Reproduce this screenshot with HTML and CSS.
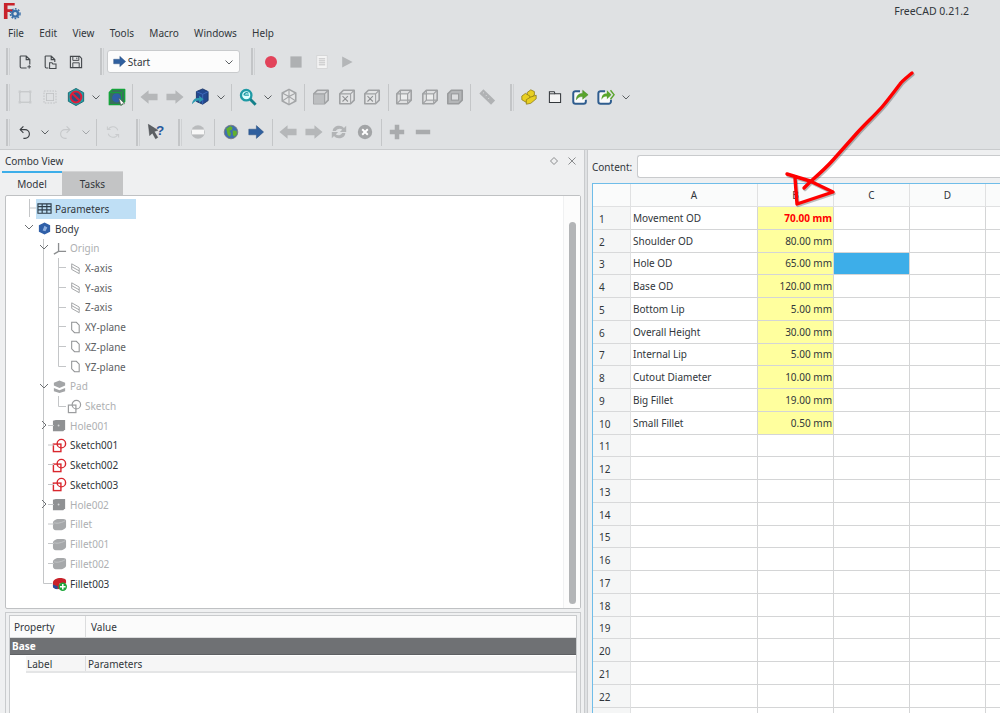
FILE: index.html
```html
<!DOCTYPE html>
<html lang="en">
<head>
<meta charset="utf-8">
<title>FreeCAD 0.21.2</title>
<link rel="stylesheet" href="styles.css">
</head>
<body>
<svg class="defs" width="0" height="0" aria-hidden="true">
  <defs>
    <symbol id="i-new" viewBox="0 0 20 20"><path d="M4 2.500h7.500l4.500 4.500v6M12 17.500H5.500a1.500 1.500 0 0 1-1.500-1.500V2.500M11.500 2.500V7H16" fill="none" stroke="#45494d" stroke-width="1.400"/><path d="M13 16h4.500M15.250 13.750v4.500" stroke="#45494d" stroke-width="1.200"/></symbol>
    <symbol id="i-open" viewBox="0 0 20 20"><path d="M4 2.500h7.500l4.500 4.500v3M8 17.500H5.500a1.500 1.500 0 0 1-1.500-1.500V2.500M11.500 2.500V7H16" fill="none" stroke="#45494d" stroke-width="1.400"/><path d="M9.500 11h3l1 1.500h4v5.500h-8z" fill="none" stroke="#45494d" stroke-width="1.300"/></symbol>
    <symbol id="i-save" viewBox="0 0 20 20"><path d="M3 3h11.500L17 5.500V17H3z" fill="none" stroke="#45494d" stroke-width="1.400"/><path d="M6 3v5h7.500V3M6 17v-6h8v6M11 4.500v2" fill="none" stroke="#45494d" stroke-width="1.200"/></symbol>
    <symbol id="i-rec" viewBox="0 0 20 20"><circle cx="10" cy="10" r="7.500" fill="#e2435a"/></symbol>
    <symbol id="i-stop" viewBox="0 0 20 20"><rect x="3" y="3" width="14" height="14" fill="#aeb0b2"/></symbol>
    <symbol id="i-doc" viewBox="0 0 20 20"><rect x="3.500" y="2" width="13" height="16" fill="#f4f4f4" stroke="#d2d3d4"/><path d="M6 6h8M6 8.500h8M6 11h8M6 13.500h8" stroke="#b5b6b7"/></symbol>
    <symbol id="i-play" viewBox="0 0 20 20"><path d="M4 3l13 7-13 7z" fill="#b4b6b8"/></symbol>
    <symbol id="i-fit" viewBox="0 0 20 20"><rect x="3.500" y="3.500" width="13" height="13" fill="none" stroke="#c0c2c4" stroke-width="1.300"/><path d="M2 2h3v3H2zM15 2h3v3h-3zM2 15h3v3H2zM15 15h3v3h-3z" fill="#c9cbcd"/></symbol>
    <symbol id="i-fitsel" viewBox="0 0 20 20"><rect x="2.500" y="2.500" width="15" height="15" fill="none" stroke="#c0c2c4" stroke-width="1.200" stroke-dasharray="2 1.500"/><rect x="5.500" y="5.500" width="9" height="9" fill="none" stroke="#c0c2c4"/></symbol>
    <symbol id="i-noway" viewBox="0 0 20 20"><path d="M10 .5l8.500 4.700v9.600L10 19.500l-8.500-4.700V5.200z" fill="#1fa3ab" stroke="#17646c"/><circle cx="10" cy="10" r="6" fill="#2f4f7f" stroke="#dc1f3a" stroke-width="2.200"/><path d="M6 6l8 8" stroke="#dc1f3a" stroke-width="2.400"/></symbol>
    <symbol id="i-greencube" viewBox="0 0 20 20"><path d="M1.500 5L5 1.500h13.500V15L15 18.500H1.500z" fill="#37705a" stroke="#15a33b" stroke-width="1.600" stroke-linejoin="round"/><path d="M1.500 5H15v13.500M15 5l3.500-3.500" fill="none" stroke="#15a33b" stroke-width="1"/><circle cx="9.500" cy="11" r="5" fill="#2f5ea8"/><path d="M12 11l6.500 6.500-3 .2-1 2z" fill="#fff" stroke="#555" stroke-width=".7"/></symbol>
    <symbol id="i-left" viewBox="0 0 20 20"><path d="M.5 10L9.500 2.500V6.500h10v7h-10v4z" fill="#b5b7b9"/></symbol>
    <symbol id="i-right" viewBox="0 0 20 20"><path d="M19.500 10L10.500 2.500V6.500H.5v7h10v4z" fill="#b5b7b9"/></symbol>
    <symbol id="i-bluecube" viewBox="0 0 20 20"><path d="M6 4l7-3 6 3v10l-6 4-7-3z" fill="#23488f" stroke="#1a3468" stroke-linejoin="round"/><path d="M6 4l7 3 6-3M13 7v11" stroke="#3f6cc0" fill="none"/><path d="M1 18c1-6 4-7 8-7V8.500l5 4-5 4V14c-3 0-5 1-8 4z" fill="#2d9ab0"/></symbol>
    <symbol id="i-zoom" viewBox="0 0 20 20"><circle cx="8" cy="8" r="5.800" fill="#dff" stroke="#1f9aa5" stroke-width="2.600"/><path d="M12.500 12.500l6 6" stroke="#14808a" stroke-width="3.200"/><path d="M5.500 8a3 3 0 0 1 5-2M6 8h5" fill="none" stroke="#1f9aa5" stroke-width="1.400"/></symbol>
    <symbol id="i-cube0" viewBox="0 0 20 20"><path d="M10 1.500l7.500 4v9l-7.500 4-7.500-4v-9z" fill="#e6e7e8" stroke="#a4a6a8" stroke-width="1.800" stroke-linejoin="round"/><path d="M2.500 5.500l7.500 4 7.500-4M10 9.500v9M10 1.500v8M2.500 14.500l7.500-5 7.500 5" stroke="#a4a6a8" stroke-width="1.200" fill="none"/></symbol>
    <symbol id="i-cube1" viewBox="0 0 20 20"><path d="M2 6.500L6 2.500h12v11l-4 4H2z" fill="#d6d7d9" stroke="#a0a2a4" stroke-width="1.800" stroke-linejoin="round"/><path d="M2 6.500v11h12V6.500z" fill="#bcbec0"/><path d="M2 6.500h12v11M14 6.500l4-4" fill="none" stroke="#a0a2a4" stroke-width="1.400"/></symbol>
    <symbol id="i-cube2" viewBox="0 0 20 20"><path d="M2 6.500L6 2.500h12v11l-4 4H2z" fill="#e3e4e5" stroke="#a0a2a4" stroke-width="1.800" stroke-linejoin="round"/><path d="M2 6.500h12v11M14 6.500l4-4" fill="none" stroke="#a0a2a4" stroke-width="1.200"/><path d="M5 9l3 3 3-3M8 12l-3 3M8 12l3 3" fill="none" stroke="#8e9092" stroke-width="1.200"/></symbol>
    <symbol id="i-cube3" viewBox="0 0 20 20"><path d="M2 6.500L6 2.500h12v11l-4 4H2z" fill="#dfe0e1" stroke="#a0a2a4" stroke-width="1.800" stroke-linejoin="round"/><rect x="6" y="6.500" width="8" height="7" fill="#eceded" stroke="#a0a2a4" stroke-width="1.300"/><path d="M2 6.500l4 0M6 2.500v4M14 13.500l4 0M14 13.500v4M6 13.500l-4 4M14 6.500l4-4" stroke="#a0a2a4" stroke-width="1.200" fill="none"/></symbol>
    <symbol id="i-cube4" viewBox="0 0 20 20"><path d="M2 6.500L6 2.500h12v11l-4 4H2z" fill="#b4b6b8" stroke="#9a9c9e" stroke-width="1.800" stroke-linejoin="round"/><rect x="6" y="6.500" width="8" height="7" fill="#dcdddf" stroke="#9a9c9e" stroke-width="1.300"/></symbol>
    <symbol id="i-rule" viewBox="0 0 20 20"><path d="M1.500 6L6 1.500 19 14l-4.500 4.500z" fill="#b0b2b4"/><path d="M6.500 5l-1 1M9.500 8l-1 1M12.500 11l-1 1" stroke="#e2e3e4"/></symbol>
    <symbol id="i-parts" viewBox="0 0 20 20"><g fill="#e8cf22" stroke="#86740f" stroke-width=".8" stroke-linejoin="round"><path d="M8 5l4-3 4 2v4l-4 3-4-2z"/><path d="M2 9l4-3 5 3v4l-4 3-5-3z"/><path d="M7 13l5-3 6-2v4l-6 5-5 1z"/></g></symbol>
    <symbol id="i-folder" viewBox="0 0 20 20"><path d="M3 3.500h6l1 2.500h7v11H3z" fill="#f4f4f4" stroke="#33373b" stroke-width="1.300"/><path d="M3 6h7" stroke="#33373b" stroke-width="1.200"/></symbol>
    <symbol id="i-export" viewBox="0 0 20 20"><path d="M10 3.500H5A2.500 2.500 0 0 0 2.500 6v9A2.500 2.500 0 0 0 5 17.500h9a2.500 2.500 0 0 0 2.500-2.500v-2" fill="#fafafa" stroke="#2f5d8f" stroke-width="2.200"/><path d="M6 13c0-5 3-7 7-7V2.500l6 5-6 5V9.500c-3 0-5 .5-7 3.500z" fill="#5aa52c" stroke="#3b7a1a" stroke-width=".5"/></symbol>
    <symbol id="i-export2" viewBox="0 0 20 20"><path d="M9 3.500H4A2.500 2.500 0 0 0 1.500 6v9A2.500 2.500 0 0 0 4 17.500h9a2.500 2.500 0 0 0 2.500-2.500v-2" fill="#fafafa" stroke="#2f5d8f" stroke-width="2.200"/><path d="M5 13c0-5 2-7 6-7V2.500l5 5-5 5V9.500c-3 0-4 .5-6 3.500z" fill="#5aa52c"/><path d="M15 2.500l4 5-4 5" fill="none" stroke="#5aa52c" stroke-width="1.500"/></symbol>
    <symbol id="i-undo" viewBox="0 0 20 20"><path d="M8 3L4 7l4 4" fill="none" stroke="#3a3e42" stroke-width="1.400"/><path d="M4 7h6a5.500 5.500 0 0 1 0 11H8" fill="none" stroke="#3a3e42" stroke-width="1.400"/></symbol>
    <symbol id="i-redo" viewBox="0 0 20 20"><path d="M12 3l4 4-4 4" fill="none" stroke="#c6c8ca" stroke-width="1.400"/><path d="M16 7h-6a5.500 5.500 0 0 0 0 11h2" fill="none" stroke="#c6c8ca" stroke-width="1.400"/></symbol>
    <symbol id="i-refresh" viewBox="0 0 20 20"><path d="M16 8a6.500 6.500 0 0 0-12-1M4 12a6.500 6.500 0 0 0 12 1" fill="none" stroke="#c9cbcd" stroke-width="1.300"/><path d="M3 3v4h4M17 17v-4h-4" fill="none" stroke="#c9cbcd" stroke-width="1.300"/></symbol>
    <symbol id="i-help" viewBox="0 0 20 20"><path d="M1.500 1.500L12 8l-4 1.500 4 6.500-2.500 1.500L6 11l-3 3z" fill="#5d6064" stroke="#3a3d40" stroke-width=".5"/><text x="10" y="13" font-family="Liberation Sans, sans-serif" font-weight="700" font-size="15" fill="#275a9c">?</text></symbol>
    <symbol id="i-pill" viewBox="0 0 20 20"><circle cx="10" cy="10" r="8.500" fill="#b9bbbd"/><rect x="2.500" y="7" width="15" height="6" fill="#f7f7f7"/></symbol>
    <symbol id="i-globe" viewBox="0 0 20 20"><circle cx="10" cy="10" r="8.500" fill="#3f6fb0" stroke="#77797b"/><path d="M4 6l5-3.500 3 2-1 3-3 1 2 3-1 4.500-3-2-1-4zM12 8l5 .5.500 4-3 3.500-2-2z" fill="#62b02e"/></symbol>
    <symbol id="i-blue" viewBox="0 0 20 20"><path d="M19.500 10L10.500 2v4.500H1v7h9.500V18z" fill="#2f5f9e" stroke="#24497a" stroke-width=".6"/></symbol>
    <symbol id="i-sync" viewBox="0 0 20 20"><path d="M3 9c0-6 9-8 12.500-3.500L18 3v7h-7l2.500-2.500C12 5.500 8 6 6.500 9zM17 11c0 6-9 8-12.500 3.500L2 17v-7h7l-2.500 2.500C8 14.500 12 14 13.500 11z" fill="#b2b4b6"/></symbol>
    <symbol id="i-x" viewBox="0 0 20 20"><circle cx="10" cy="10" r="9" fill="#a3a5a7"/><path d="M6.500 6.500l7 7M13.500 6.500l-7 7" stroke="#fff" stroke-width="2.400"/></symbol>
    <symbol id="i-plus" viewBox="0 0 20 20"><path d="M7.500 2h5v5.500H18v5h-5.500V18h-5v-5.500H2v-5h5.500z" fill="#a9abad"/></symbol>
    <symbol id="i-minus" viewBox="0 0 20 20"><rect x="2" y="7.500" width="16" height="5" fill="#a9abad"/></symbol>
    <symbol id="i-chev" viewBox="0 0 10 10"><path d="M1.500 3.500L5 7l3.500-3.500" fill="none" stroke="#5c6063" stroke-width="1"/></symbol>
    <symbol id="t-sheet" viewBox="0 0 16 16"><path d="M1 3h14v10H1zM1 6h14M1 9.500h14M5.500 3v10M10.500 3v10" fill="#bfdff5" stroke="#2e3d49" stroke-width="1.200"/></symbol>
    <symbol id="t-body" viewBox="0 0 16 16"><path d="M8 1.500l6 3v7l-6 3-6-3v-7z" fill="#2f5fa8"/><path d="M8 5l3 2-2 4-3-1z" fill="#8fb0e0"/></symbol>
    <symbol id="t-origin" viewBox="0 0 16 16"><path d="M7 2v9M7 11l-5 3M7 11h8" fill="none" stroke="#8c8e90" stroke-width="1.400"/></symbol>
    <symbol id="t-axis" viewBox="0 0 16 16"><path d="M5 3l8 4.500v6l-8-4.500z" fill="none" stroke="#9fa1a3"/><path d="M5 6l8 4.500" stroke="#9fa1a3"/></symbol>
    <symbol id="t-plane" viewBox="0 0 16 16"><path d="M5 2.500h5l3 3v8H8l-3-3z" fill="none" stroke="#8f9193" stroke-width="1.100"/></symbol>
    <symbol id="t-pad" viewBox="0 0 16 16"><path d="M2 4l6-2.500L14 4v3l-6 2.500L2 7zM2 9.500l6 2.500 6-2.500V13l-6 2-6-2z" fill="#a3a5a7"/></symbol>
    <symbol id="t-skg" viewBox="0 0 16 16"><rect x="1.500" y="6.500" width="8" height="8" fill="none" stroke="#9b9d9f" stroke-width="1.300"/><circle cx="10" cy="6" r="4.500" fill="none" stroke="#9b9d9f" stroke-width="1.300"/></symbol>
    <symbol id="t-skr" viewBox="0 0 16 16"><rect x="1.500" y="6.500" width="8" height="8" fill="none" stroke="#d9272e" stroke-width="1.500"/><circle cx="10" cy="6" r="4.500" fill="none" stroke="#d9272e" stroke-width="1.500"/></symbol>
    <symbol id="t-hole" viewBox="0 0 16 16"><path d="M1 3l3-1h10v10l-2 2H1z" fill="#8f9193"/><circle cx="7" cy="8" r="1" fill="#d5d6d7"/></symbol>
    <symbol id="t-fillet" viewBox="0 0 16 16"><path d="M1 6c0-2 3-4 6-4h5c2 0 3 1 3 2v6c0 2-3 4-6 4H4c-2 0-3-1-3-3z" fill="#a6a8aa"/><path d="M2 6c2 1 7 1 12-2" fill="none" stroke="#c2c4c6"/></symbol>
    <symbol id="t-fillet3" viewBox="0 0 16 16"><path d="M1 7c0-3 4-5 8-5 3 0 6 1 6 3v3H8v6c-4 0-7-1-7-3z" fill="#c8222a"/><path d="M1 9l5 2v3c-3 0-5-1-5-3z" fill="#274d9a"/><circle cx="11.500" cy="11.500" r="4.500" fill="#1ea83c"/><path d="M11.500 8.500v6M8.500 11.500h6" stroke="#fff" stroke-width="1.600"/></symbol>
  </defs>
</svg>

<div class="app">
  <header class="titlebar">
    <svg class="logo" viewBox="0 0 20 20" aria-hidden="true"><path d="M1 1h12v3H5v4h6v3H5v8H1z" fill="#c8222a"/><circle cx="13.500" cy="13" r="3.200" fill="none" stroke="#3a6fa8" stroke-width="2.600"/><circle cx="13.500" cy="13" r="5.400" fill="none" stroke="#3a6fa8" stroke-width="1.600" stroke-dasharray="2 1.500"/></svg>
    <span class="apptitle">FreeCAD 0.21.2</span>
  </header>
  <nav class="menubar">
    <span>File</span><span>Edit</span><span>View</span><span>Tools</span><span>Macro</span><span>Windows</span><span>Help</span>
  </nav>

  <div class="toolbar tb1">
    <i class="grip"></i>
    <span class="t"><svg><use href="#i-new"/></svg></span>
    <span class="t"><svg><use href="#i-open"/></svg></span>
    <span class="t"><svg><use href="#i-save"/></svg></span>
    <i class="grip gap wide"></i>
    <div class="combo">
      <svg class="combo-ic"><use href="#i-blue"/></svg><span class="combo-label">Start</span>
      <svg class="combo-ch"><use href="#i-chev"/></svg>
    </div>
    <i class="grip gap wide"></i>
    <span class="t"><svg><use href="#i-rec"/></svg></span>
    <span class="t"><svg><use href="#i-stop"/></svg></span>
    <span class="t"><svg><use href="#i-doc"/></svg></span>
    <span class="t"><svg><use href="#i-play"/></svg></span>
  </div>

  <div class="toolbar tb2">
    <i class="grip"></i>
    <span class="t"><svg><use href="#i-fit"/></svg></span>
    <span class="t"><svg><use href="#i-fitsel"/></svg></span>
    <span class="t big"><svg><use href="#i-noway"/></svg></span>
    <span class="c"><svg><use href="#i-chev"/></svg></span>
    <span class="t big"><svg><use href="#i-greencube"/></svg></span>
    <i class="sep"></i>
    <span class="t big"><svg><use href="#i-left"/></svg></span>
    <span class="t big"><svg><use href="#i-right"/></svg></span>
    <span class="t big"><svg><use href="#i-bluecube"/></svg></span>
    <span class="c"><svg><use href="#i-chev"/></svg></span>
    <i class="sep"></i>
    <span class="t big"><svg><use href="#i-zoom"/></svg></span>
    <span class="c"><svg><use href="#i-chev"/></svg></span>
    <span class="t big"><svg><use href="#i-cube0"/></svg></span>
    <i class="sep"></i>
    <span class="t big"><svg><use href="#i-cube1"/></svg></span>
    <span class="t big"><svg><use href="#i-cube2"/></svg></span>
    <span class="t big"><svg><use href="#i-cube2"/></svg></span>
    <i class="sep n"></i>
    <span class="t big"><svg><use href="#i-cube3"/></svg></span>
    <span class="t big"><svg><use href="#i-cube3"/></svg></span>
    <span class="t big"><svg><use href="#i-cube4"/></svg></span>
    <i class="sep n"></i>
    <span class="t big"><svg><use href="#i-rule"/></svg></span>
    <i class="grip gap"></i>
    <span class="t big"><svg><use href="#i-parts"/></svg></span>
    <span class="t"><svg><use href="#i-folder"/></svg></span>
    <span class="t big"><svg><use href="#i-export"/></svg></span>
    <span class="t big"><svg><use href="#i-export2"/></svg></span>
    <span class="c"><svg><use href="#i-chev"/></svg></span>
  </div>

  <div class="toolbar tb3">
    <i class="grip"></i>
    <span class="t"><svg><use href="#i-undo"/></svg></span>
    <span class="c"><svg><use href="#i-chev"/></svg></span>
    <span class="t"><svg><use href="#i-redo"/></svg></span>
    <span class="c dim"><svg><use href="#i-chev"/></svg></span>
    <i class="sep"></i>
    <span class="t"><svg><use href="#i-refresh"/></svg></span>
    <i class="grip gap"></i>
    <span class="t big"><svg><use href="#i-help"/></svg></span>
    <i class="grip gap"></i>
    <span class="t"><svg><use href="#i-pill"/></svg></span>
    <i class="sep"></i>
    <span class="t"><svg><use href="#i-globe"/></svg></span>
    <span class="t"><svg><use href="#i-blue"/></svg></span>
    <i class="sep n"></i>
    <span class="t big"><svg><use href="#i-left"/></svg></span>
    <span class="t big"><svg><use href="#i-right"/></svg></span>
    <span class="t big"><svg><use href="#i-sync"/></svg></span>
    <span class="t"><svg><use href="#i-x"/></svg></span>
    <i class="sep"></i>
    <span class="t big"><svg><use href="#i-plus"/></svg></span>
    <span class="t big"><svg><use href="#i-minus"/></svg></span>
  </div>

  <main class="workspace">
    <section class="combo-dock">
      <div class="dock-title">
        <span>Combo View</span>
        <span class="dock-btns">
          <svg width="10" height="10" viewBox="0 0 10 10"><path d="M5 1.500L8.500 5 5 8.500 1.500 5z" fill="none" stroke="#8a8c8e"/></svg>
          <svg width="10" height="10" viewBox="0 0 10 10"><path d="M1.500 1.500l7 7M8.500 1.500l-7 7" stroke="#8a8c8e"/></svg>
        </span>
      </div>
      <div class="tabs"><span class="tab active">Model</span><span class="tab">Tasks</span></div>
      <div class="tree-box">
        <svg class="guides" width="60" height="412" viewBox="0 0 60 412" aria-hidden="true">
          <g fill="none" stroke="#c4c6c8">
            <path d="M23.500 3v18M23.500 12h7M37.500 43v344.500M37.500 387.500h9"/>
            <path d="M52.500 62v108.500M52.500 71.500h9M52.500 91.500h9M52.500 111.500h9M52.500 130.500h9M52.500 150.500h9M52.500 170.500h9"/>
            <path d="M52.500 200v10.500h8"/>
            <path d="M42 229.500h6M42 249h6M42 268.500h6M42 288.500h6M42 308.500h6M42 328h6M42 347.500h6M42 367.500h6"/>
          </g>
          <g fill="none" stroke="#6c6f72">
            <path d="M19 29l4 4 4-4M34 49l4 4 4-4M34 188l4 4 4-4M36 225l4 4-4 4M36 304l4 4-4 4"/>
          </g>
        </svg>
        <div class="tree">
          <div class="row l1"><span class="sel"><svg class="ti"><use href="#t-sheet"/></svg>Parameters</span></div>
          <div class="row l1"><svg class="ti"><use href="#t-body"/></svg>Body</div>
          <div class="row l2 off"><svg class="ti"><use href="#t-origin"/></svg>Origin</div>
          <div class="row l3 mid"><svg class="ti"><use href="#t-axis"/></svg>X-axis</div>
          <div class="row l3 mid"><svg class="ti"><use href="#t-axis"/></svg>Y-axis</div>
          <div class="row l3 mid"><svg class="ti"><use href="#t-axis"/></svg>Z-axis</div>
          <div class="row l3 mid"><svg class="ti"><use href="#t-plane"/></svg>XY-plane</div>
          <div class="row l3 mid"><svg class="ti"><use href="#t-plane"/></svg>XZ-plane</div>
          <div class="row l3 mid"><svg class="ti"><use href="#t-plane"/></svg>YZ-plane</div>
          <div class="row l2 off"><svg class="ti"><use href="#t-pad"/></svg>Pad</div>
          <div class="row l3 off"><svg class="ti"><use href="#t-skg"/></svg>Sketch</div>
          <div class="row l2 off"><svg class="ti"><use href="#t-hole"/></svg>Hole001</div>
          <div class="row l2"><svg class="ti"><use href="#t-skr"/></svg>Sketch001</div>
          <div class="row l2"><svg class="ti"><use href="#t-skr"/></svg>Sketch002</div>
          <div class="row l2"><svg class="ti"><use href="#t-skr"/></svg>Sketch003</div>
          <div class="row l2 off"><svg class="ti"><use href="#t-hole"/></svg>Hole002</div>
          <div class="row l2 off"><svg class="ti"><use href="#t-fillet"/></svg>Fillet</div>
          <div class="row l2 off"><svg class="ti"><use href="#t-fillet"/></svg>Fillet001</div>
          <div class="row l2 off"><svg class="ti"><use href="#t-fillet"/></svg>Fillet002</div>
          <div class="row l2"><svg class="ti"><use href="#t-fillet3"/></svg>Fillet003</div>
        </div>
        <div class="scroll"><span class="thumb"></span></div>
      </div>
      <div class="prop-box">
        <div class="prop">
          <div class="prop-head"><span class="pc1">Property</span><span class="pc2">Value</span></div>
          <div class="prop-group">Base</div>
          <div class="prop-row"><span class="pc1">Label</span><span class="pc2">Parameters</span></div>
        </div>
      </div>
    </section>

    <section class="sheet-dock">
      <div class="content-bar"><label class="content-label" for="cnt">Content:</label><input id="cnt" class="content-input" type="text"></div>
      <div class="sheet">
        <table>
          <colgroup><col class="c0"><col class="ca"><col class="cb"><col class="cc"><col class="cc"><col class="cc"></colgroup>
          <thead><tr><th></th><th>A</th><th>B</th><th>C</th><th>D</th><th></th></tr></thead>
          <tbody>
            <tr><th>1</th><td>Movement OD</td><td class="num alert">70.00 mm</td><td></td><td></td><td></td></tr>
            <tr><th>2</th><td>Shoulder OD</td><td class="num">80.00 mm</td><td></td><td></td><td></td></tr>
            <tr><th>3</th><td>Hole OD</td><td class="num">65.00 mm</td><td class="cur"></td><td></td><td></td></tr>
            <tr><th>4</th><td>Base OD</td><td class="num">120.00 mm</td><td></td><td></td><td></td></tr>
            <tr><th>5</th><td>Bottom Lip</td><td class="num">5.00 mm</td><td></td><td></td><td></td></tr>
            <tr><th>6</th><td>Overall Height</td><td class="num">30.00 mm</td><td></td><td></td><td></td></tr>
            <tr><th>7</th><td>Internal Lip</td><td class="num">5.00 mm</td><td></td><td></td><td></td></tr>
            <tr><th>8</th><td>Cutout Diameter</td><td class="num">10.00 mm</td><td></td><td></td><td></td></tr>
            <tr><th>9</th><td>Big Fillet</td><td class="num">19.00 mm</td><td></td><td></td><td></td></tr>
            <tr><th>10</th><td>Small Fillet</td><td class="num">0.50 mm</td><td></td><td></td><td></td></tr>
            <tr><th>11</th><td></td><td></td><td></td><td></td><td></td></tr>
            <tr><th>12</th><td></td><td></td><td></td><td></td><td></td></tr>
            <tr><th>13</th><td></td><td></td><td></td><td></td><td></td></tr>
            <tr><th>14</th><td></td><td></td><td></td><td></td><td></td></tr>
            <tr><th>15</th><td></td><td></td><td></td><td></td><td></td></tr>
            <tr><th>16</th><td></td><td></td><td></td><td></td><td></td></tr>
            <tr><th>17</th><td></td><td></td><td></td><td></td><td></td></tr>
            <tr><th>18</th><td></td><td></td><td></td><td></td><td></td></tr>
            <tr><th>19</th><td></td><td></td><td></td><td></td><td></td></tr>
            <tr><th>20</th><td></td><td></td><td></td><td></td><td></td></tr>
            <tr><th>21</th><td></td><td></td><td></td><td></td><td></td></tr>
            <tr><th>22</th><td></td><td></td><td></td><td></td><td></td></tr>
            <tr><th></th><td></td><td></td><td></td><td></td><td></td></tr>
          </tbody>
        </table>
      </div>
    </section>
  </main>

  <svg class="scribble" width="1000" height="713" viewBox="0 0 1000 713" aria-hidden="true">
    <g fill="none" stroke-linecap="round" stroke-linejoin="round">
      <path class="shadow" d="M912 73C906 78 902 81 900 84C894 92 888 100 882 107C874 116 865 124 857 133C849 142 841 151 833 160C826 168 818 175 810 182L804 188M787 174L810 181L833 192L797 204L795 178"/>
      <path class="ink" d="M912 73C906 78 902 81 900 84C894 92 888 100 882 107C874 116 865 124 857 133C849 142 841 151 833 160C826 168 818 175 810 182L804 188M787 174L810 181L833 192L797 204L795 178"/>
    </g>
  </svg>
</div>
</body>
</html>
```

FILE: styles.css
```css
* { box-sizing: border-box; }
html, body { margin: 0; padding: 0; height: 100%; overflow: hidden; }
body { font-family: "Noto Sans", "Open Sans", sans-serif; font-size: 10px; color: #31363b; background: #dfe1e3; }
.defs { position: absolute; }
.app { position: relative; width: 1000px; height: 713px; overflow: hidden; display: flex; flex-direction: column; background: #dfe1e3; }

.titlebar { height: 22px; flex: none; display: flex; align-items: center; justify-content: space-between; padding: 0 31px 0 3px; }
.logo { width: 18px; height: 18px; }
.apptitle { font-size: 10.5px; }

.menubar { height: 22px; flex: none; display: flex; align-items: center; gap: 15.3px; padding-left: 8px; }

.toolbar { flex: none; display: flex; align-items: center; padding-left: 6px; }
.tb1 { height: 35px; }
.tb2 { height: 36px; }
.tb3 { height: 34px; }
.t { width: 25.6px; height: 20px; flex: none; display: flex; align-items: center; justify-content: center; }
.t svg { width: 16px; height: 16px; }
.t.big svg { width: 18px; height: 18px; }
.c { width: 15px; height: 20px; flex: none; display: flex; align-items: center; justify-content: center; }
.c svg { width: 10px; height: 10px; }
.dim { opacity: .45; }
.grip { display: block; width: 4px; height: 27px; flex: none; margin-right: 2px; border-left: 2px solid #c3c5c7; border-right: 1px solid #cfd1d3; }
.grip.gap { margin: 0 3px 0 10px; }
.grip.gap.wide { margin-left: 11px; }
.sep { display: block; width: 1px; height: 27px; margin: 0 3px; flex: none; background: #c4c6c8; }
.sep.n { margin: 0 2.500px; }

.combo { width: 133px; height: 23px; flex: none; display: flex; align-items: center; background: #fcfcfc; border: 1px solid #c9cbcd; border-radius: 3px; padding: 0 5px; }
.combo-ic { width: 13px; height: 13px; margin-right: 2px; }
.combo-label { flex: 1; }
.combo-ch { width: 10px; height: 10px; }

.workspace { flex: 1; min-height: 0; display: flex; gap: 2px; border-top: 1px solid #c9cbcd; }
.combo-dock { width: 585px; flex: none; display: flex; flex-direction: column; background: #eff0f1; border-right: 1px solid #c9cbcd; }
.dock-title { height: 21px; flex: none; display: flex; align-items: center; justify-content: space-between; padding: 1px 7px 0 5px; }
.dock-btns { display: flex; gap: 8px; }
.tabs { height: 24px; flex: none; display: flex; padding-left: 2px; }
.tab { width: 61px; display: flex; align-items: center; justify-content: center; background: #c3c4c5; border-top: 1px solid #d3d4d5; }
.tab.active { width: 60px; background: #eff0f1; border-top: 2px solid #3daee9; }

.tree-box { position: relative; height: 414px; flex: none; margin: 0 3px 0 5px; background: #fff; border: 1px solid #bfc1c3; border-radius: 2px; display: flex; }
.guides { position: absolute; left: 0; top: 0; }
.tree { flex: 1; padding-top: 3px; }
.row { height: 19.72px; display: flex; align-items: center; color: #31363b; }
.l1 { padding-left: 31px; }
.l2 { padding-left: 46px; }
.l3 { padding-left: 61px; }
.off { color: #aeb0b2; }
.mid { color: #5d6063; }
.ti { width: 15px; height: 15px; margin-right: 3px; flex: none; }
.sel { display: flex; align-items: center; width: 100px; height: 19.72px; margin-left: -1px; padding-left: 1px; background: #bfdff5; }
.scroll { width: 17px; flex: none; padding: 26px 4px 4px 5px; border-left: 1px solid #f0f1f2; background: #fcfcfc; }
.thumb { display: block; width: 7px; height: 382px; border-radius: 4px; background: #b3b5b7; }

.prop-box { flex: 1; min-height: 0; margin: 3px 3px 0 5px; padding: 2px 3px 0; border: 1px solid #c9cbcd; border-bottom: 0; background: #eff0f1; }
.prop { height: 100%; background: #fff; border: 1px solid #c9cbcd; border-bottom: 0; }
.prop-head { height: 22px; display: flex; align-items: center; background: #fbfbfb; border-bottom: 1px solid #dcddde; }
.prop-head .pc1 { width: 76px; padding-left: 4px; border-right: 1px solid #dcddde; height: 100%; display: flex; align-items: center; }
.prop-head .pc2 { padding-left: 5px; }
.prop-group { height: 17px; display: flex; align-items: center; padding-left: 2px; background: #6f7174; color: #fff; font-weight: 700; border-bottom: 1px solid #5e6063; }
.prop-row { height: 17px; margin: 1px 0 0 16px; display: flex; align-items: center; background: #f6f6f6; border-bottom: 2px solid #e4e5e6; }
.prop-row .pc1 { width: 60px; padding-left: 1px; border-right: 1px solid #dcddde; height: 100%; display: flex; align-items: center; }
.prop-row .pc2 { padding-left: 2px; }

.sheet-dock { flex: 1; min-width: 0; display: flex; flex-direction: column; padding-left: 4px; background: #eff0f1; border-left: 1px solid #c9cbcd; }
.content-bar { height: 33px; flex: none; display: flex; align-items: center; gap: 5px; }
.content-input { flex: 1; min-width: 0; height: 23px; background: #fff; border: 1px solid #c9cbcd; border-right: 0; border-radius: 3px 0 0 3px; outline: none; }
.sheet { flex: 1; min-height: 0; overflow: hidden; background: #fff; border: 1px solid #6fbde9; border-right: 0; border-bottom: 0; }
table { table-layout: fixed; border-collapse: separate; border-spacing: 0; width: 450px; }
.c0 { width: 38px; }
.ca { width: 127px; }
.cb { width: 76px; }
.cc { width: 76px; }
thead th { height: 23px; font-weight: 400; text-align: center; background: #fafbfb; border-right: 1px solid #e0e1e2; border-bottom: 1px solid #e0e1e2; padding: 0; }
tbody th { height: 22.76px; font-weight: 400; text-align: left; padding: 2px 0 0 6px; background: #f5f6f6; border-right: 1px solid #e0e1e2; border-bottom: 1px solid #d8d9da; }
tbody td { height: 22.76px; padding: 0 1px 0 2px; border-right: 1px solid #d4d5d6; border-bottom: 1px solid #d4d5d6; background: #fff; white-space: nowrap; overflow: hidden; }
tbody td.num { text-align: right; background: #ffff9e; }
tbody td.alert { color: #f00; font-weight: 700; }
tbody td.cur { background: #3daee9; }

.scribble { position: absolute; left: 0; top: 0; pointer-events: none; }
.ink { stroke: #f00; stroke-width: 3.4; }
.shadow { stroke: rgba(0,0,0,.25); stroke-width: 3.4; transform: translate(1px, 1.5px); }
```
